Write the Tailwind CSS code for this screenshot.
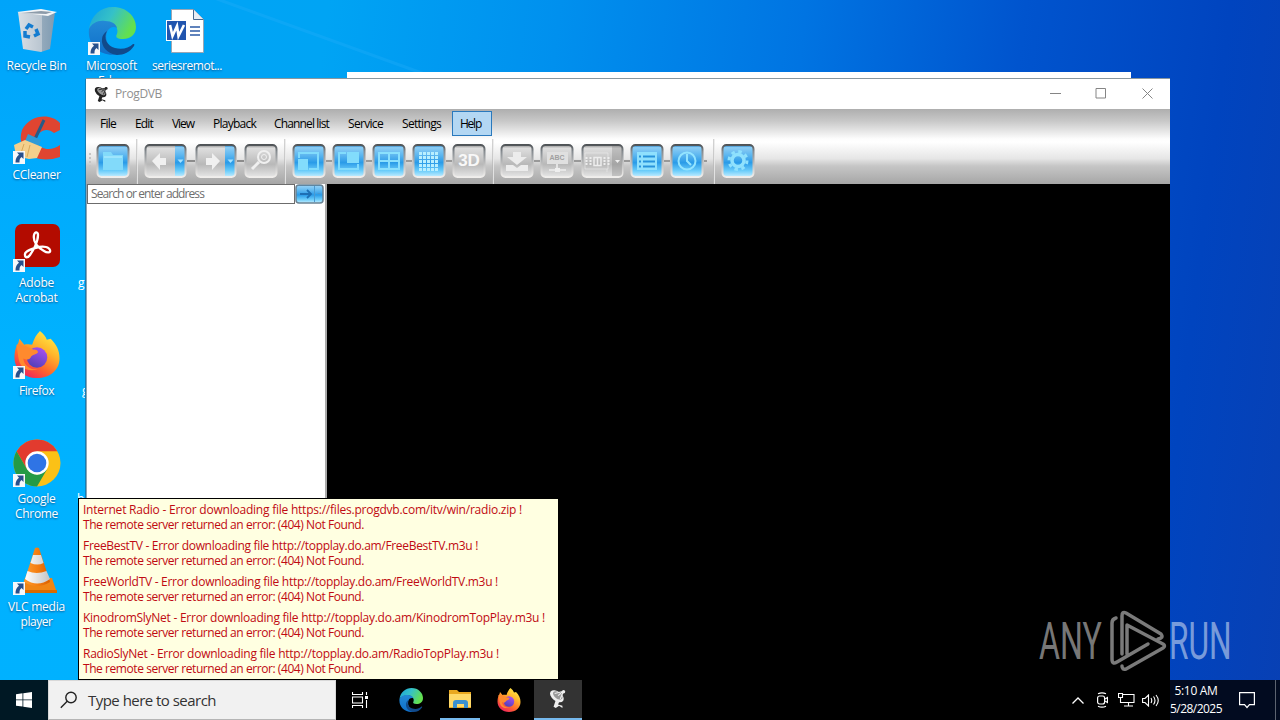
<!DOCTYPE html>
<html lang="en">
<head>
<meta charset="utf-8">
<title>Desktop</title>
<script src="https://cdn.jsdelivr.net/npm/@tailwindcss/browser@4"></script>
</head>
<body class="overflow-hidden">
<svg class="absolute h-0 w-0">
  <defs>
    <linearGradient id="btnBlue" x1="0" y1="0" x2="0" y2="1"><stop offset="0" stop-color="#1673ba"/><stop offset=".08" stop-color="#8ccdf5"/><stop offset=".3" stop-color="#60b8f0"/><stop offset=".55" stop-color="#2a9be8"/><stop offset=".8" stop-color="#6accfa"/><stop offset="1" stop-color="#c5eeff"/></linearGradient>
    <linearGradient id="btnGray" x1="0" y1="0" x2="0" y2="1"><stop offset="0" stop-color="#8c8c8c"/><stop offset=".1" stop-color="#dedede"/><stop offset=".4" stop-color="#c8c8c8"/><stop offset=".6" stop-color="#b8b8b8"/><stop offset="1" stop-color="#e6e6e6"/></linearGradient>
    <linearGradient id="rim" x1="0" y1="0" x2="0" y2="1"><stop offset="0" stop-color="#4f5356"/><stop offset=".2" stop-color="#858b90"/><stop offset=".6" stop-color="#c0c0c0"/><stop offset="1" stop-color="#f0eeec"/></linearGradient>
    <linearGradient id="edgeA" x1="0" y1="0" x2="1" y2=".4"><stop offset="0" stop-color="#1aa3d8"/><stop offset=".5" stop-color="#35c1c8"/><stop offset="1" stop-color="#63e04f"/></linearGradient>
    <linearGradient id="edgeB" x1="0" y1="0" x2="0" y2="1"><stop offset="0" stop-color="#2389d6"/><stop offset="1" stop-color="#0e6fc9"/></linearGradient>
    <linearGradient id="ffA" x1=".8" y1="0" x2=".2" y2="1"><stop offset="0" stop-color="#fff04a"/><stop offset=".35" stop-color="#ffb52b"/><stop offset=".65" stop-color="#ff6a2b"/><stop offset="1" stop-color="#ee1a63"/></linearGradient>
    <linearGradient id="ffB" x1=".7" y1="0" x2=".2" y2="1"><stop offset="0" stop-color="#a94ff0"/><stop offset="1" stop-color="#4b3fb4"/></linearGradient>
    <linearGradient id="cone" x1="0" x2="1" y1="0" y2="0"><stop offset="0" stop-color="#ff9d2e"/><stop offset=".5" stop-color="#f57f12"/><stop offset="1" stop-color="#d95f00"/></linearGradient>
    <linearGradient id="coneW" x1="0" x2="1" y1="0" y2="0"><stop offset="0" stop-color="#fff"/><stop offset="1" stop-color="#c4c4c4"/></linearGradient>
    <linearGradient id="bin" x1="0" x2="1" y1="0" y2="0"><stop offset="0" stop-color="#d9dfe5"/><stop offset=".65" stop-color="#b9c5d0"/><stop offset=".66" stop-color="#93a9bb"/><stop offset="1" stop-color="#7f9bb2"/></linearGradient>
    <symbol id="edge" viewBox="0 0 48 48"><path d="M1 22C3 8 13 0 25 0c14 0 23 10 23 20 0 8-6 12-13 12-6 0-8-2-6-5 2-5-2-11-9-12C11 14 4 17 1 22Z" fill="url(#edgeA)"/><path d="M1 22c3-6 9-9 16-8 7 0 11 3 12 7-3-2-8-1-10 4-3 8 2 18 12 22C14 51-1 39 1 22Z" fill="url(#edgeB)"/><path d="M19 24c-4 7 0 15 8 17 7 2 14 0 18-4 1 0 2 0 1 2-4 6-10 9-17 9-10-1-16-9-15-16 0-3 2-6 5-8Z" fill="#114a8b"/></symbol>
    <symbol id="firefox" viewBox="0 0 48 48"><path d="M27 0c4 3 6 6 7 9l4-1c6 6 9 12 9 20 0 12-10 20-23 20S1 39 1 27C1 20 3 15 5 12l1-4 5 6c3-1 6 0 8 0C21 8 23 4 27 0Z" fill="url(#ffA)"/><circle cx="24" cy="27" r="10.500" fill="url(#ffB)"/><path d="M3 14c7 0 11 2 17 5 4 0 5 1 5 3-2 2-5 2-7 4-1 3-4 4-8 2 1 8 8 12 15 11-12 4-19-3-20-12Z" fill="#ff8a2e"/></symbol>
    <symbol id="short" viewBox="0 0 12 13"><path d="M0 0h12v13H0z" fill="#f6f8fb"/><path d="M4 1.500h6.500v6.500L8.500 6C6.500 7.500 6.500 9 6.500 11.500H2.500C2.500 8 3.500 5.500 6 3.700Z" fill="#28508c"/></symbol>
    <symbol id="dish" viewBox="0 0 16 18"><ellipse cx="7" cy="6.500" rx="7" ry="4.300" transform="rotate(38 7 6.500)" fill="currentColor"/><ellipse cx="7.800" cy="5.800" rx="5" ry="2.800" transform="rotate(38 7.800 5.800)" fill="#999"/><path d="M8 6l5-4M5 4l8-2M10 9l3-7" stroke="currentColor" stroke-width="1"/><circle cx="13" cy="2.500" r="1.500" fill="currentColor"/><path d="M6 10l3 2-1 2 4 1v2l-3-2-3 2-2-1Z" fill="currentColor"/></symbol>
    <symbol id="b1" viewBox="0 0 34 34"><rect x="1.500" y="1" width="31" height="32" rx="4" fill="url(#btnBlue)" stroke="url(#rim)" stroke-width="2"/></symbol>
    <symbol id="g1" viewBox="0 0 34 34"><rect x="1.500" y="1" width="31" height="32" rx="4" fill="url(#btnGray)" stroke="url(#rim)" stroke-width="2"/></symbol>
  </defs>
</svg>

<main class="relative h-[720px] w-[1280px] overflow-hidden bg-[linear-gradient(97deg,#00a4f8_0%,#00a4f4_24%,#0090ee_41%,#0074e2_59%,#0054ce_75%,#0044bf_90%,#0840b4_100%)] font-['Open_Sans','Noto_Sans',sans-serif] text-xs">
  <div class="absolute inset-y-0 left-0 w-[90px] bg-linear-to-b from-[#00a4fa] via-[#00b2ff] to-[#00b1ff]"></div>
  <svg class="absolute left-0 top-0 h-20 w-[500px]" viewBox="0 0 500 80"><path d="M170 -18 430 76" stroke="#28b0fb" stroke-width="3" opacity=".3"/></svg>

  <!-- desktop icons -->
  <section class="absolute left-0 top-0 w-[73px] leading-[15px] text-white [text-shadow:0_1px_2px_#0a5590]">
    <div class="flex h-[108px] flex-col items-center pt-[9px]">
      <svg class="h-[43px] w-10" viewBox="0 0 40 43"><path d="M1 3 6 40l18 3 9-3 5-37Z" fill="url(#bin)"/><path d="M0 3 24 0l16 3-9 4Z" fill="#f3f5f7"/><path d="M4 4l20-2 11 1-6 2Z" fill="#8d9caa"/><g fill="none" stroke="#147cd0" stroke-width="3.500"><path d="M9 20l3-4 4 2M19 20l2 5-4 2M13 28l-5-1 0-5"/></g></svg>
      <span data-w="60" class="mt-[6px] whitespace-nowrap">Recycle Bin</span>
    </div>
    <div class="flex h-[108px] flex-col items-center pt-[8px]">
      <svg class="h-12 w-12" viewBox="0 0 48 48"><path d="M47 7C38-3 17-2 9 14 3 33 20 50 47 41V29C38 36 27 33 24 27c-2-11 9-17 17-10l6-3Z" fill="#df4531"/><path d="M31 4 21 25" stroke="#265b88" stroke-width="3"/><path d="M15 18l13 6-3 7-13-6Z" fill="#2f9bd8"/><path d="M12 24 1 29l2 11 13 3 8-1 5-11Z" fill="#f4d08c"/><path d="M11 28 7 40M17 29l-3 12" stroke="#d9a95a"/><use href="#short" x="0" y="35" width="12" height="13"/></svg>
      <span data-w="48" class="mt-[3px] whitespace-nowrap">CCleaner</span>
    </div>
    <div class="flex h-[108px] flex-col items-center pt-[8px]">
      <svg class="h-12 w-12" viewBox="0 0 48 48"><rect x="2" y="0" width="45" height="43" rx="7" fill="#b30b00"/><path d="M12 31c-1-4 9-7 14-8s10 0 11 3-3 3-6 1c-7-4-11-10-10-16 1-4 4-3 4 0 0 7-5 16-8 20-2 3-5 3-5 0Z" fill="none" stroke="#fff" stroke-width="2.300"/><use href="#short" x="0" y="35" width="12" height="13"/></svg>
      <span data-w="35" class="mt-[3px] whitespace-nowrap">Adobe</span><span data-w="42" class="whitespace-nowrap">Acrobat</span>
    </div>
    <div class="flex h-[108px] flex-col items-center pt-[7px]">
      <svg class="h-12 w-12" viewBox="0 0 48 48"><use href="#firefox" width="48" height="47"/><use href="#short" x="0" y="35" width="12" height="13"/></svg>
      <span data-w="35" class="mt-[4px] whitespace-nowrap">Firefox</span>
    </div>
    <div class="flex h-[108px] flex-col items-center pt-[7px]">
      <svg class="h-12 w-12" viewBox="0 0 48 48"><circle cx="24" cy="24" r="23.500" fill="#fbc116"/><path d="M3.600 12.300A23.500 23.500 0 0 1 44.400 12.300H24L13.900 30Z" fill="#e23b2e"/><path d="M3.600 12.300A23.500 23.500 0 0 0 24 47.500L34.200 29.900 24 35.700 13.900 30Z" fill="#249a46"/><circle cx="24" cy="24" r="11.700" fill="#fff"/><circle cx="24" cy="24" r="9.300" fill="#2f74e5"/><use href="#short" x="0" y="35" width="12" height="13"/></svg>
      <span data-w="38" class="mt-[4px] whitespace-nowrap">Google</span><span data-w="43" class="whitespace-nowrap">Chrome</span>
    </div>
    <div class="flex h-[108px] flex-col items-center pt-[7px]">
      <svg class="h-12 w-12" viewBox="0 0 48 48"><path d="M12 31h27l5 15H7Z" fill="#f08514"/><path d="M7 43h37v3H7Z" fill="#d96a00"/><path d="M22 1q2-1 4 0l11 34q-13 8-26 0Z" fill="url(#cone)"/><path d="M20 8h8l2.500 8q-6 3-13 0ZM14.500 24q9 4 19 0l3.500 8q-13 9-25 0Z" fill="url(#coneW)"/><use href="#short" x="0" y="35" width="12" height="13"/></svg>
      <span data-w="57" class="mt-[4px] whitespace-nowrap">VLC media</span><span data-w="32" class="whitespace-nowrap">player</span>
    </div>
  </section>
  <section class="absolute left-[75px] top-0 flex leading-[15px] text-white [text-shadow:0_1px_2px_#0a5590]">
    <div class="flex w-[73px] flex-col items-center pt-[7px]">
      <svg class="h-12 w-12" viewBox="0 0 48 48"><use href="#edge" width="48" height="48"/><use href="#short" x="0" y="35" width="12" height="13"/></svg>
      <span data-w="51" class="mt-[3px] whitespace-nowrap">Microsoft</span><span data-w="27" class="whitespace-nowrap">Edge</span>
    </div>
    <div class="flex w-[78px] flex-col items-center pt-[9px]">
      <svg class="mr-[5px] h-[44px] w-[38px]" viewBox="0 0 38 44"><path d="M5.500.500h22l10 10v33h-32Z" fill="#fff" stroke="#9aa6b4"/><path d="M27.500.500v10h10" fill="#e8edf4" stroke="#48688f"/><path d="M24 18h10M24 22h10M24 26h10" stroke="#2c5ba7" stroke-width="1.300"/><rect x=".5" y="11.500" width="20" height="20" fill="#2155ae" stroke="#fff"/><path d="M4 16l2.500 11L11 17l1.500 10L18 16" fill="none" stroke="#fff" stroke-width="2.600"/></svg>
      <span data-w="70" class="mt-[5px] whitespace-nowrap">seriesremot...</span>
    </div>
  </section>
  <span class="absolute left-[78px] top-[275px] leading-[15px] text-white">g</span>
  <span class="absolute left-[82px] top-[383px] leading-[15px] text-white">g</span>
  <span class="absolute left-[77px] top-[491px] leading-[15px] text-white">b</span>

  <!-- window behind -->
  <div class="absolute left-[347px] top-[72px] h-4 w-[784px] bg-white"></div>

  <!-- ProgDVB window -->
  <section class="absolute left-[86px] top-[79px] flex h-[641px] w-[1084px] flex-col bg-black shadow-[0_-1px_0_#8a979f,-1px_0_0_#147eb5]">
    <header class="flex h-[30px] items-center bg-white pl-2">
      <svg class="h-[17px] w-[15px] text-[#222]"><use href="#dish"/></svg>
      <span data-w="47" class="ml-1.5 whitespace-nowrap text-[#8f8f8f]">ProgDVB</span>
      <svg class="mb-px ml-auto mr-[17px] h-[11px] w-[103px]" viewBox="0 0 103 11" fill="none" stroke="#858585"><path d="M0 5.500h11M46 .5h9.500v9.500h-9.500Z"/><path d="M92.500.500l10 10M102.500.500l-10 10"/></svg>
    </header>
    <div class="h-[75px] bg-[linear-gradient(#aeaeae_0%,#c8c8c8_16%,#fdfdfd_40%,#ffffff_44%,#e6e6e6_66%,#c6c6c6_76%,#a6a6a6_100%)]">
      <nav class="flex h-[30px] items-center pl-[14px] text-black">
        <div class="w-[35px]"><span data-w="16" class="whitespace-nowrap">File</span></div>
        <div class="w-[37px]"><span data-w="18" class="whitespace-nowrap">Edit</span></div>
        <div class="w-[41px]"><span data-w="22" class="whitespace-nowrap">View</span></div>
        <div class="w-[61px]"><span data-w="43" class="whitespace-nowrap">Playback</span></div>
        <div class="w-[74px]"><span data-w="55" class="whitespace-nowrap">Channel list</span></div>
        <div class="w-[54px]"><span data-w="35" class="whitespace-nowrap">Service</span></div>
        <div class="w-[50px]"><span data-w="39" class="whitespace-nowrap">Settings</span></div>
        <div class="mb-px flex h-[25px] w-10 items-center border border-[#2a79bd] bg-[#b3d7f3] pl-[7px]"><span data-w="21" class="whitespace-nowrap">Help</span></div>
      </nav>
      <div class="flex h-[45px] items-center pb-px">
        <svg class="h-[45px] w-[10px]" viewBox="0 0 10 45" fill="#c4c4c4"><path d="M3 14h2v2H3zM3 18h2v2H3zM3 22h2v2H3zM3 26h2v2H3z"/></svg>
        <svg class="h-[34px] w-[34px]" viewBox="0 0 34 34"><use href="#b1"/><path d="M7 8h8l2 3h10v15H7Z" fill="#82dafa"/><path d="M8 13h18" stroke="#b8efff"/></svg>
        <div class="ml-[6px] mr-[6px] h-[45px] w-[2px] border-r border-white/60 bg-[#b4b4b4]/60"></div>
        <svg class="h-[34px] w-[43px]" viewBox="0 0 43 34"><rect x="1.500" y="1" width="40" height="32" rx="4" fill="url(#btnGray)"/><path d="M31 1h7q4 0 4 4v24q0 4-4 4h-7Z" fill="url(#btnBlue)"/><rect x="1.500" y="1" width="40" height="32" rx="4" fill="none" stroke="url(#rim)" stroke-width="2"/><path d="M8 17l8-8v5h6v7h-6v5Z" fill="#f0f0f0"/><path d="M33.500 15.500h6l-3 3.500Z" fill="#a4e2ff"/></svg>
        <div class="h-[2px] w-2 bg-[#8c8c8c]"></div>
        <svg class="h-[34px] w-[42px]" viewBox="0 0 42 34"><rect x="1.500" y="1" width="39" height="32" rx="4" fill="url(#btnGray)"/><path d="M30 1h7q4 0 4 4v24q0 4-4 4h-7Z" fill="url(#btnBlue)"/><rect x="1.500" y="1" width="39" height="32" rx="4" fill="none" stroke="url(#rim)" stroke-width="2"/><path d="M25 17l-8-8v5h-6v7h6v5Z" fill="#f0f0f0"/><path d="M32.500 15.500h6l-3 3.500Z" fill="#a4e2ff"/></svg>
        <div class="h-[2px] w-[7px] bg-[#8c8c8c]"></div>
        <svg class="h-[34px] w-[34px]" viewBox="0 0 34 34" fill="none" stroke="#f0f0f0"><use href="#g1"/><circle cx="20" cy="13" r="6" stroke-width="2"/><circle cx="20" cy="13" r="2.500" stroke-width="1"/><path d="M15 18l-7 7" stroke-width="3"/></svg>
        <div class="ml-[6px] mr-[6px] h-[45px] w-[2px] border-r border-white/60 bg-[#b4b4b4]/60"></div>
        <svg class="h-[34px] w-[34px]" viewBox="0 0 34 34" fill="#82dcfc"><use href="#b1"/><path d="M6 8h21v18H17v-2h8V10H8v4H6Z"/><path d="M6 15h10v11H6z"/></svg>
        <div class="h-[2px] w-[6px] bg-[#999]"></div>
        <svg class="h-[34px] w-[34px]" viewBox="0 0 34 34" fill="#82dcfc"><use href="#b1"/><path d="M6 8h8v2H8v14h17v-4h2v6H6Z"/><path d="M15 8h12v11H15z"/></svg>
        <div class="h-[2px] w-[6px] bg-[#999]"></div>
        <svg class="h-[34px] w-[34px]" viewBox="0 0 34 34"><use href="#b1"/><path d="M7 9h20v16H7ZM17 9v16M7 17h20" fill="none" stroke="#8be0fd" stroke-width="2"/></svg>
        <div class="h-[2px] w-[6px] bg-[#999]"></div>
        <svg class="h-[34px] w-[34px]" viewBox="0 0 34 34" fill="#b8efff"><use href="#b1"/><path d="M7 8h3v3H7zM11 8h3v3h-3zM15 8h3v3h-3zM19 8h3v3h-3zM23 8h3v3h-3zM7 12h3v3H7zM11 12h3v3h-3zM15 12h3v3h-3zM19 12h3v3h-3zM23 12h3v3h-3zM7 16h3v3H7zM11 16h3v3h-3zM15 16h3v3h-3zM19 16h3v3h-3zM23 16h3v3h-3zM7 20h3v3H7zM11 20h3v3h-3zM15 20h3v3h-3zM19 20h3v3h-3zM23 20h3v3h-3zM7 24h3v3H7zM11 24h3v3h-3zM15 24h3v3h-3zM19 24h3v3h-3zM23 24h3v3h-3z"/></svg>
        <div class="h-[2px] w-[6px] bg-[#999]"></div>
        <div class="relative flex h-[34px] w-[34px] items-center justify-center"><svg class="absolute inset-0 h-[34px] w-[34px]"><use href="#g1"/></svg><span class="relative font-['Liberation_Sans',sans-serif] text-[17px] font-bold text-[#f8f8f8]">3D</span></div>
        <div class="ml-[6px] mr-[6px] h-[45px] w-[2px] border-r border-white/60 bg-[#b4b4b4]/60"></div>
        <svg class="h-[34px] w-[34px]" viewBox="0 0 34 34" fill="#ececec"><use href="#g1"/><path d="M13 8h8v5h6L17 21 7 13h6Z"/><path d="M6 21h7l4 3 4-3h7v6H6Z"/></svg>
        <div class="h-[2px] w-[6px] bg-[#999]"></div>
        <div class="relative flex h-[34px] w-[34px] justify-center"><svg class="absolute inset-0 h-[34px] w-[34px]" viewBox="0 0 34 34"><use href="#g1"/><path d="M7 8h21v12H7z" fill="#e0e0e0"/><path d="M17 20v6M9 26h17" fill="none" stroke="#efefef" stroke-width="1.500"/><path d="M15 24h5v4h-5z" fill="#efefef"/></svg><span class="relative mt-[10px] font-['Liberation_Sans',sans-serif] text-[7px] font-bold leading-[8px] text-[#a0a0a0]">ABC</span></div>
        <div class="h-[2px] w-[7px] bg-[#999]"></div>
        <svg class="h-[34px] w-[43px]" viewBox="0 0 43 34" fill="none" stroke="#ededed"><rect x="1.500" y="1" width="40" height="32" rx="4" fill="url(#btnGray)" stroke="url(#rim)" stroke-width="2"/><path d="M31 2h7q3 0 3 3v24q0 3-3 3h-7Z" fill="#777" fill-opacity=".3" stroke="none"/><path d="M4 9h23v16H4ZM26 25v3" stroke-opacity=".6"/><path d="M5.500 13v9M9.500 13v9M23.500 13v9M27.500 13v9" stroke-width="2" stroke-dasharray="2 1"/><path d="M13 13.500h7v8h-7ZM16.500 14v8" stroke-width="1.500"/><path d="M34 16h5l-2.500 3Z" fill="#eee" stroke="none"/></svg>
        <div class="h-[2px] w-[6px] bg-[#999]"></div>
        <svg class="h-[34px] w-[34px]" viewBox="0 0 34 34"><use href="#b1"/><path d="M7 8h20v18H7z" fill="#8fe0fd"/><path d="M9 12.500h2M9 17.500h2M9 22.500h2M13 12.500h12M13 17.500h12M13 22.500h12" stroke="#2893dc" stroke-width="2"/></svg>
        <div class="h-[2px] w-[6px] bg-[#999]"></div>
        <svg class="h-[34px] w-[34px]" viewBox="0 0 34 34" fill="none" stroke="#93e4ff" stroke-width="2"><use href="#b1"/><circle cx="17" cy="17" r="8.500"/><path d="M17 10v7l4 4"/></svg>
        <div class="h-[2px] w-[3px] bg-[#999]"></div>
        <div class="ml-[6px] mr-[6px] h-[45px] w-[2px] border-r border-white/60 bg-[#b4b4b4]/60"></div>
        <svg class="h-[34px] w-[34px]" viewBox="0 0 34 34" fill="none" stroke="#8fe1fd"><use href="#b1"/><circle cx="17" cy="16.500" r="6" stroke-width="3.500"/><circle cx="17" cy="16.500" r="9" stroke-width="3" stroke-dasharray="3.500 3.570"/></svg>
      </div>
    </div>
    <div class="flex min-h-0 flex-1">
      <aside class="w-[241px] border-r-2 border-[#a9a9a9] border-l border-l-[#8ba4b3] bg-white">
        <div class="flex h-[20px]">
          <div class="flex h-[20px] w-[208px] items-center border border-[#6c6c6c] pl-[3px]"><span data-w="113" class="whitespace-nowrap text-[#6e6e6e]">Search or enter address</span></div>
          <svg class="h-[20px] w-[29px]" viewBox="0 0 29 20"><rect x="1" y="1" width="27" height="18" rx="3" fill="url(#btnBlue)" stroke="#6a8394" stroke-width="1.500"/><path d="M5 10h11M12 6l4 4-4 4" fill="none" stroke="#1d6fb4" stroke-width="1.800"/><path d="M19.500 2v16" stroke="#4a9ad0"/><path d="M22.500 9.500h3" stroke="#4a9ad0"/></svg>
        </div>
      </aside>
    </div>
  </section>

  <!-- error balloon -->
  <section class="absolute left-[78px] top-[498px] flex h-[182px] w-[481px] flex-col gap-[6px] border border-black bg-[#ffffe1] pl-1 pt-[3px] leading-[15px] text-[#c00a12]">
    <div class="flex flex-col items-start whitespace-nowrap"><span data-w="439">Internet Radio - Error downloading file https://files.progdvb.com/itv/win/radio.zip !</span><span data-w="281">The remote server returned an error: (404) Not Found.</span></div>
    <div class="flex flex-col items-start whitespace-nowrap"><span data-w="395">FreeBestTV - Error downloading file http://topplay.do.am/FreeBestTV.m3u !</span><span data-w="281">The remote server returned an error: (404) Not Found.</span></div>
    <div class="flex flex-col items-start whitespace-nowrap"><span data-w="415">FreeWorldTV - Error downloading file http://topplay.do.am/FreeWorldTV.m3u !</span><span data-w="281">The remote server returned an error: (404) Not Found.</span></div>
    <div class="flex flex-col items-start whitespace-nowrap"><span data-w="462">KinodromSlyNet - Error downloading file http://topplay.do.am/KinodromTopPlay.m3u !</span><span data-w="281">The remote server returned an error: (404) Not Found.</span></div>
    <div class="flex flex-col items-start whitespace-nowrap"><span data-w="416">RadioSlyNet - Error downloading file http://topplay.do.am/RadioTopPlay.m3u !</span><span data-w="281">The remote server returned an error: (404) Not Found.</span></div>
  </section>

  <!-- taskbar -->
  <footer class="absolute bottom-0 left-0 flex h-10 w-[1280px] bg-[linear-gradient(90deg,#001824_0_86px,#000_86px_1170px,#020b20_1170px)] text-white">
    <div class="flex w-12 items-center justify-center"><svg class="h-4 w-4" viewBox="0 0 16 16" fill="#fff"><path d="M0 2.200 6.500 1.300v6.200H0ZM7.300 1.200 16 0v7.500H7.300ZM0 8.300h6.500v6.300L0 13.700ZM7.300 8.300H16V16l-8.700-1.200Z"/></svg></div>
    <div class="flex w-[288px] items-center border border-b-[#b5b5b5] border-[#d8d8d8] bg-[#f1f1f1] pl-[11px] text-[#333]">
      <svg class="h-[18px] w-[18px]" viewBox="0 0 18 18" fill="none" stroke="#222" stroke-width="1.400"><circle cx="11" cy="6.500" r="5.200"/><path d="M7.200 10.300.8 16.700"/></svg>
      <span data-w="128" class="ml-[10px] whitespace-nowrap text-[15px]">Type here to search</span>
    </div>
    <div class="flex w-12 items-center justify-center"><svg class="h-4 w-[17px]" viewBox="0 0 17 16" fill="none" stroke="#fff" stroke-width="1.100"><path d="M.5 0v2.500h10V0M.5 5h10v6H.5ZM.5 16v-2.500h10V16M14.500 0v3M14.500 8v8"/><path d="M13 4h3v3h-3z" fill="#fff" stroke="none"/></svg></div>
    <div class="flex w-[54px] items-center justify-center"><svg class="h-6 w-6"><use href="#edge"/></svg></div>
    <div class="ml-[2px] flex w-10 items-center justify-center border-b-2 border-[#76b9ed]"><svg class="h-[18px] w-[22px]" viewBox="0 0 22 18"><path d="M0 0h8l2 2h12v16H0Z" fill="#e9a820"/><path d="M0 4h22v13H0z" fill="#ffd968"/><path d="M4 18v-5q0-3 3-3h9q3 0 3 3v5h-4v-4H8v4Z" fill="#3a91d0"/></svg></div>
    <div class="ml-[5px] flex w-12 items-center justify-center"><svg class="h-6 w-6"><use href="#firefox"/></svg></div>
    <div class="ml-px flex w-12 items-center justify-center border-b-2 border-[#76b9ed] bg-[#333]"><svg class="h-[20px] w-[18px] text-[#eee]"><use href="#dish"/></svg></div>
    <div class="ml-auto flex items-center pr-[6px]">
      <svg class="h-[7px] w-3" viewBox="0 0 12 7"><path d="M.5 6.500 6 1l5.500 5.500" fill="none" stroke="#fff" stroke-width="1.300"/></svg>
      <svg class="ml-[13px] h-4 w-[11px]" viewBox="0 0 11 16" fill="none" stroke="#fff" stroke-width="1.200"><rect x=".6" y="4" width="7" height="8" rx="2"/><path d="M8 7l2.500-1.500v5L8 9M1 1.800Q5 0 9 1.800M1 14.200Q5 16 9 14.200"/></svg>
      <svg class="ml-[10px] h-[14px] w-[17px]" viewBox="0 0 17 14" fill="none" stroke="#fff" stroke-width="1.100"><path d="M5 1.500h11v8H5M10.500 9.500v3M6 13h9M.5.500h4v4h-4ZM2.500 4.500v5h3"/></svg>
      <svg class="ml-[7px] h-[13px] w-[18px]" viewBox="0 0 18 13" fill="none" stroke="#fff" stroke-width="1.100"><path d="M.6 4.500H3L6.500 1v11L3 8.500H.6ZM9 4q1.500 2.500 0 5M11.500 2.500q3 4 0 8M14 1q4.500 5.500 0 11"/></svg>
      <div class="ml-[9px] flex w-[54px] flex-col items-center whitespace-nowrap leading-[18px]"><span data-w="43">5:10 AM</span><span data-w="52">5/28/2025</span></div>
    </div>
    <svg class="ml-[10px] mr-5 mt-3 h-[17px] w-4" viewBox="0 0 16 17"><path d="M.6.600h14.800v12H10.500L8 15.500 5.500 12.600H.6Z" fill="none" stroke="#fff" stroke-width="1.200"/></svg>
    <div class="mr-[4px] w-px bg-[#5c6370]"></div>
  </footer>

  <!-- watermark -->
  <div class="absolute left-[1036px] top-[606px] h-[70px] w-[220px]">
    <svg class="h-[70px] w-[220px] overflow-visible" viewBox="0 0 220 70" fill="#fff" fill-opacity=".48" font-family="Roboto, sans-serif">
      <text transform="translate(3 53) scale(.66 1)" font-size="52" textLength="95" lengthAdjust="spacingAndGlyphs">ANY</text>
      <text transform="translate(133 53) scale(.66 1)" font-size="52" textLength="95" lengthAdjust="spacingAndGlyphs">RUN</text>
      <path d="M80 12q-4 1-4 5v36q0 6 5 3l31-18M86 48V10q0-5 4-3l35 21q3 4-3 5M91 48V19l36 19q3 2 0 4L90 63q-4 1-4-3" fill="none" stroke="#fff" stroke-opacity=".48" stroke-width="3.500" stroke-linejoin="round" stroke-linecap="round"/>
    </svg>
  </div>
</main>

<script>
  function fitLabels() {
    document.querySelectorAll('[data-w]').forEach(function (el) {
      var range = document.createRange();
      range.selectNodeContents(el);
      var spacing = 0;
      for (var i = 0; i < 3; i++) {
        el.style.letterSpacing = spacing + 'px';
        spacing += (el.dataset.w - range.getBoundingClientRect().width) / el.textContent.length;
      }
      el.style.letterSpacing = spacing + 'px';
    });
  }
  fitLabels();
  window.addEventListener('load', fitLabels);
  document.fonts.ready.then(fitLabels);
</script>
</body>
</html>
